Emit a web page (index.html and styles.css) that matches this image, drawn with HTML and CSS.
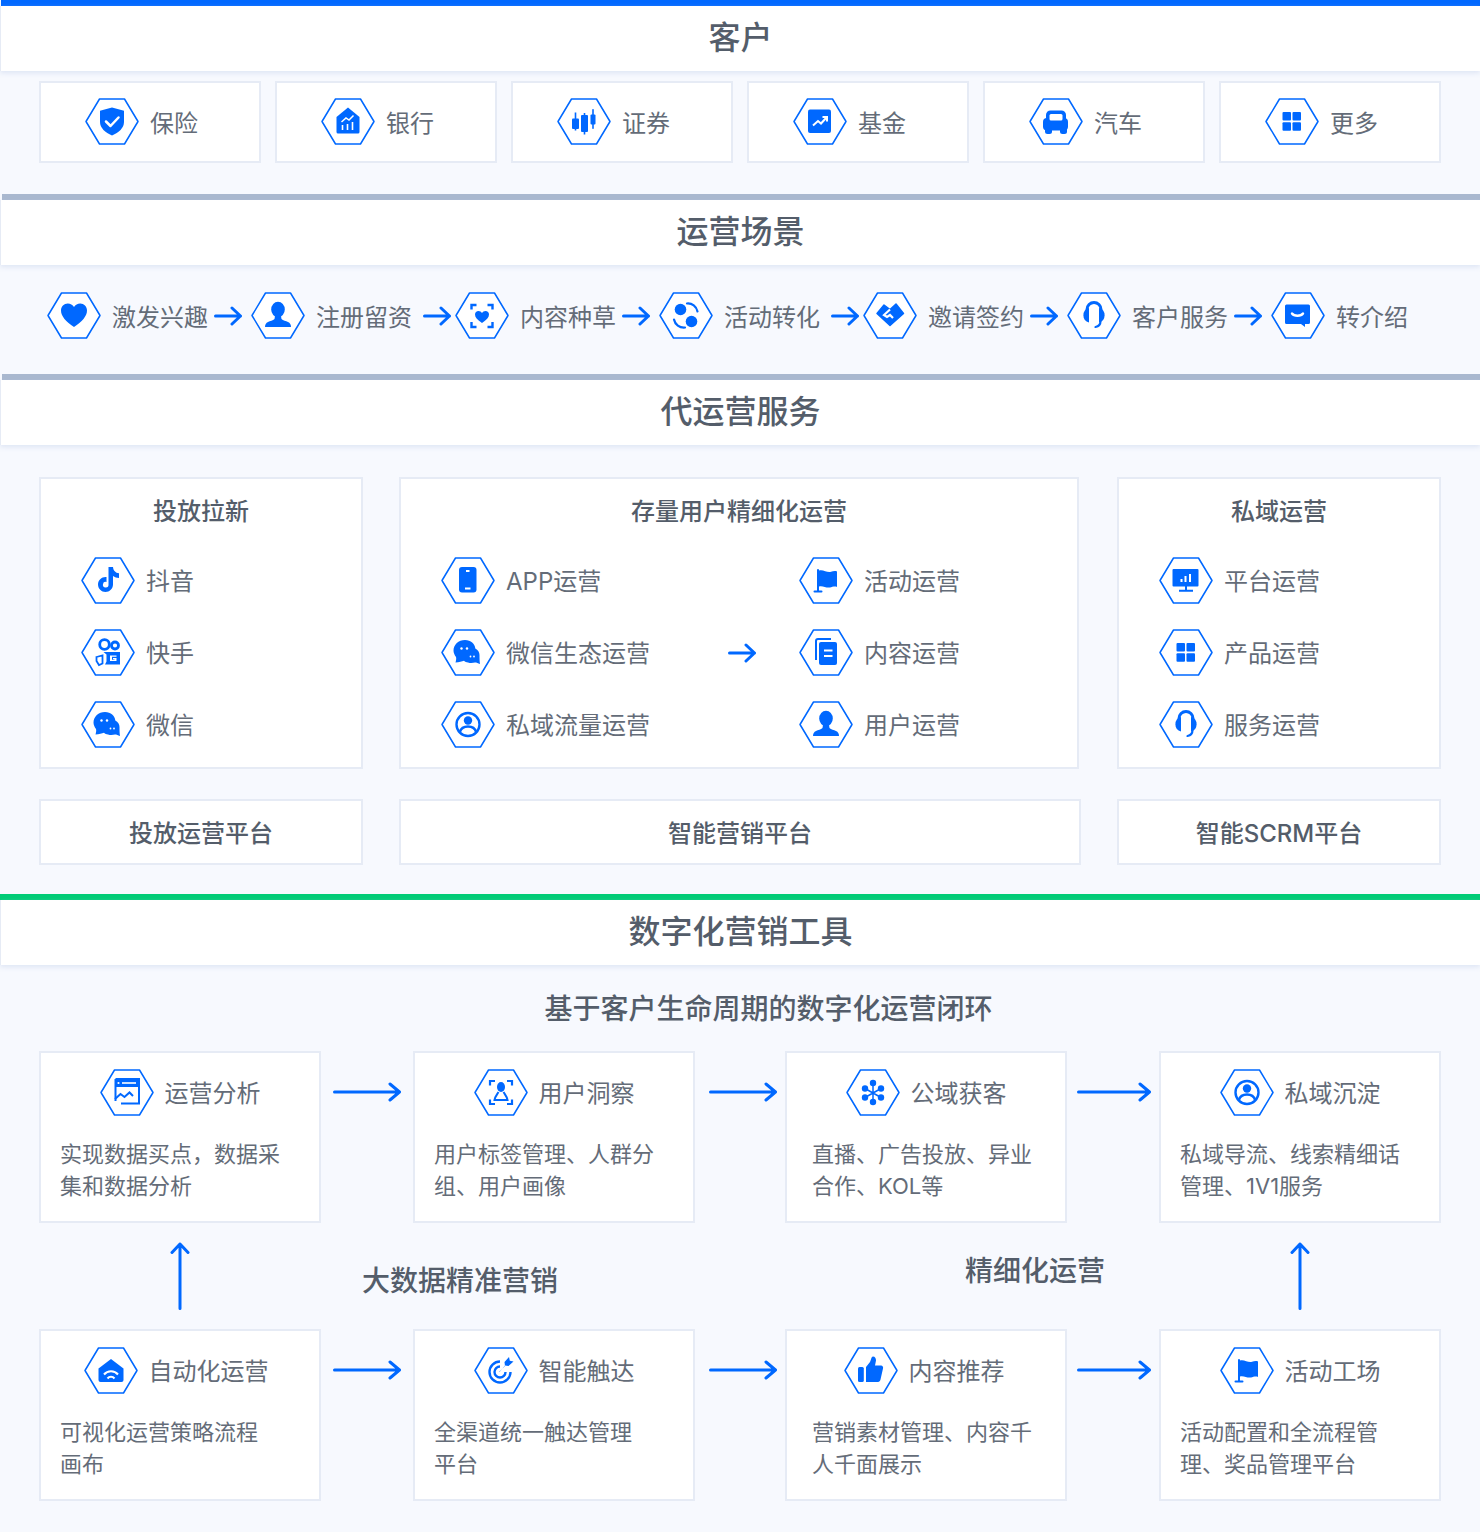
FILE: index.html
```html
<!DOCTYPE html>
<html lang="zh-CN">
<head>
<meta charset="utf-8">
<title>客户运营服务全景</title>
<link rel="stylesheet" href="styles.css">
</head>
<body>
<svg class="sprite" xmlns="http://www.w3.org/2000/svg">
  <defs>
    <polygon id="frame" points="1,23.5 14.5,1 39.5,1 53,23.5 39.5,46 14.5,46" fill="#fff" stroke="#0068ff" stroke-width="1.5" stroke-linejoin="round"/>
    <symbol id="i-arrow" viewBox="0 0 28 20"><path d="M1.500 10h25M18 2l8.500 8-8.500 8" fill="none" stroke="#0068ff" stroke-width="3" stroke-linecap="round" stroke-linejoin="round"/></symbol>
    <symbol id="i-shield" viewBox="0 0 54 47"><use href="#frame"/><path d="M27 9.500l12 3.200v11.300c0 6-5.200 10.500-12 13.500-6.800-3-12-7.500-12-13.500V12.700z" fill="#0068ff"/><path d="M21 23.500l4.500 4.500 8-8.500" fill="none" stroke="#fff" stroke-width="2.500" stroke-linecap="round" stroke-linejoin="round"/></symbol>
    <symbol id="i-bank" viewBox="0 0 54 47"><use href="#frame"/><path d="M27 9.500l11.500 9.500v15a1.500 1.500 0 0 1-1.500 1.500H17a1.500 1.500 0 0 1-1.500-1.500V19z" fill="#0068ff"/><path d="M21.500 32v-5M26.500 32v-6M31.500 32v-8" stroke="#fff" stroke-width="1.600" fill="none"/><path d="M20.500 24l4.500-4 3 2 4.500-4.500" stroke="#fff" stroke-width="1.500" fill="none"/></symbol>
    <symbol id="i-candle" viewBox="0 0 54 47"><use href="#frame"/><g fill="#0068ff"><rect x="15" y="20.500" width="7" height="10.500" rx="1"/><rect x="17.700" y="14.500" width="1.600" height="18"/><rect x="24" y="17" width="7" height="17" rx="1"/><rect x="26.700" y="15" width="1.600" height="21.500"/><rect x="33.500" y="16.500" width="5" height="10" rx="1"/><rect x="35.200" y="11" width="1.600" height="20" rx=".8"/></g></symbol>
    <symbol id="i-fund" viewBox="0 0 54 47"><use href="#frame"/><rect x="15" y="11.500" width="23" height="23.500" rx="2" fill="#0068ff"/><path d="M20 27.500l5-4.500 3 2.500 5.500-6M29.500 19h4.500v4.500" fill="none" stroke="#fff" stroke-width="2"/></symbol>
    <symbol id="i-car" viewBox="0 0 54 47"><use href="#frame"/><g fill="#0068ff"><rect x="17" y="12.500" width="20" height="14" rx="4.500"/><rect x="14" y="20" width="25" height="12.500" rx="4"/><rect x="16" y="29" width="7" height="7" rx="2.500"/><rect x="31" y="29" width="7" height="7" rx="2.500"/></g><rect x="20.500" y="16" width="13" height="6.500" rx="1.500" fill="#fff"/></symbol>
    <symbol id="i-grid" viewBox="0 0 54 47"><use href="#frame"/><g fill="#0068ff"><rect x="17.500" y="14" width="8.500" height="8.500" rx="1"/><rect x="27.500" y="14" width="8.500" height="8.500" rx="1"/><rect x="17.500" y="24.300" width="8.500" height="8.500" rx="1"/><rect x="27.500" y="24.300" width="8.500" height="8.500" rx="1"/></g></symbol>
    <symbol id="i-heart" viewBox="0 0 54 47"><use href="#frame"/><path d="M27 35c-8-5.500-13-10.600-13-16.500 0-4 3-7 6.800-7 2.600 0 4.800 1.300 6.200 3.500 1.400-2.200 3.600-3.500 6.200-3.500 3.800 0 6.800 3 6.800 7 0 5.900-5 11-13 16.500z" fill="#0068ff"/></symbol>
    <symbol id="i-person" viewBox="0 0 54 47"><use href="#frame"/><g fill="#0068ff"><ellipse cx="27" cy="17.500" rx="6.800" ry="7.800"/><path d="M14 35c0-2.500 1-4 3-5 2-1 5-1.500 6.500-3l.5-3h6l.5 3c1.500 1.500 4.500 2 6.500 3 2 1 3 2.500 3 5z"/></g></symbol>
    <symbol id="i-scanheart" viewBox="0 0 54 47"><use href="#frame"/><path d="M16.500 17.500v-4.500h5M32.500 13h5v4.500M37.500 30v5h-5M21.500 35h-5v-5" fill="none" stroke="#0068ff" stroke-width="2.400"/><path d="M27 31c-4.500-3-7-5.500-7-8.500 0-2 1.500-3.500 3.500-3.500 1.500 0 2.700.7 3.500 2 .8-1.300 2-2 3.500-2 2 0 3.500 1.500 3.500 3.500 0 3-2.500 5.500-7 8.500z" fill="#0068ff"/></symbol>
    <symbol id="i-swap" viewBox="0 0 54 47"><use href="#frame"/><g fill="#0068ff"><circle cx="21.500" cy="17.500" r="5.800"/><circle cx="32.500" cy="29.500" r="5.800"/></g><path d="M28 11.500c5-.5 9.500 3 10.500 8M26 35.500c-5.500.5-10-3-11-8" fill="none" stroke="#0068ff" stroke-width="2.200" stroke-linecap="round"/></symbol>
    <symbol id="i-deal" viewBox="0 0 54 47"><use href="#frame"/><path d="M27 33.500L14 21.500l7-8.500 6 4.500 6-5.500 7.500 9.500z" fill="#0068ff" stroke="#0068ff" stroke-width="1.500" stroke-linejoin="round"/><path d="M27 17.500l-6 5.500 3 2 3-2 3 3" fill="none" stroke="#fff" stroke-width="2.200"/></symbol>
    <symbol id="i-headset" viewBox="0 0 54 47"><use href="#frame"/><path d="M20 21v-3.500a7 7 0 0 1 14 0V21" fill="none" stroke="#0068ff" stroke-width="3"/><g fill="#0068ff"><path d="M22 16a7.500 7.500 0 0 0 0 14.500z"/><path d="M32 16a7.500 7.500 0 0 1 0 14.500z"/></g><path d="M33.500 29c0 3.500-2 5.500-5 6" fill="none" stroke="#0068ff" stroke-width="2.200" stroke-linecap="round"/></symbol>
    <symbol id="i-chat" viewBox="0 0 54 47"><use href="#frame"/><path d="M15.500 12.500h22a1.500 1.500 0 0 1 1.500 1.500v16.500a1.500 1.500 0 0 1-1.500 1.500H34v3l-4-3H15.500a1.500 1.500 0 0 1-1.500-1.500V14a1.500 1.500 0 0 1 1.500-1.500z" fill="#0068ff"/><path d="M21 21.500c2 3 9 3 11 0" fill="none" stroke="#fff" stroke-width="2.400" stroke-linecap="round"/></symbol>
    <symbol id="i-tiktok" viewBox="0 0 54 47"><use href="#frame"/><path fill-rule="evenodd" d="M27.500 10h4.500c.3 3.500 2.500 6 6 6.300V21c-2.300 0-4.300-.7-6-2v8.500c0 4.200-3.500 7.500-7.500 7.500S17 31.700 17 27.500s3.500-7.500 7.500-7.500l1 .1V25a2.800 2.800 0 1 0 2 2.500z" fill="#0068ff"/></symbol>
    <symbol id="i-kuaishou" viewBox="0 0 54 47"><use href="#frame"/><g fill="none" stroke="#0068ff"><circle cx="23.500" cy="15.500" r="4.800" stroke-width="2.800"/><circle cx="34" cy="16.500" r="3.500" stroke-width="2.800"/><path d="M15.500 28l6-1.500v8l-3.500 1.500-2.500-4z" stroke-width="1.800"/></g><path fill-rule="evenodd" d="M22.500 23h16.500v12.500H24l1.500-3v-7z M29 26.500v5.500h6.500v-3H32v1.200h1.500v.6h-2.500v-3h4.500v-1.300z" fill="#0068ff"/></symbol>
    <symbol id="i-wechat" viewBox="0 0 54 47"><use href="#frame"/><path d="M24 11c5.800 0 10 3.800 10.300 8.500 2.700 1.300 4.200 3.700 4.200 6.500 0 3 .1 6.500.5 9-2-.8-3.500-1.500-5-1.500-2 .5-4.500.8-7 0-1.500-.3-3-.8-4-1.800-2 .8-5 1.500-8.500 1.800.5-2 1-4 .5-5.500-1.500-2-2.500-4.300-2.500-6.500 0-5.800 5-10.500 11.500-10.500z" fill="#0068ff"/><g fill="#fff"><circle cx="20.500" cy="19.500" r="1.200"/><circle cx="26" cy="19.500" r="1.200"/><circle cx="29.500" cy="27.500" r=".9"/><circle cx="33" cy="27.500" r=".9"/></g></symbol>
    <symbol id="i-phone" viewBox="0 0 54 47"><use href="#frame"/><rect x="18" y="10" width="17.500" height="25.500" rx="3" fill="#0068ff"/><path d="M25 14h3.500M24 31.500h5.500" stroke="#fff" stroke-width="1.800"/></symbol>
    <symbol id="i-ring" viewBox="0 0 54 47"><use href="#frame"/><circle cx="27" cy="23.500" r="11.500" fill="none" stroke="#0068ff" stroke-width="2.400"/><circle cx="27" cy="19.500" r="4.200" fill="#0068ff"/><path d="M19 31c1-4 4-5.500 8-5.500s7 1.500 8 5.500" fill="none" stroke="#0068ff" stroke-width="2.400"/></symbol>
    <symbol id="i-flag" viewBox="0 0 54 47"><use href="#frame"/><path d="M19 13v21M15.500 34.500h7" stroke="#0068ff" stroke-width="2" stroke-linecap="round"/><path d="M20 13.500c4-1.500 8 2.500 12 1.300 2-.6 4-1.300 6-.3v15.500c-2-1-5 0-7 .5-4 .7-7-2-11-1z" fill="#0068ff"/></symbol>
    <symbol id="i-docs" viewBox="0 0 54 47"><use href="#frame"/><path d="M17 31V12a2 2 0 0 1 2-2h13" fill="none" stroke="#0068ff" stroke-width="2"/><rect x="20" y="13" width="18" height="23" rx="2" fill="#0068ff"/><path d="M25 21.500h8.500M25 27h8.500" stroke="#fff" stroke-width="2"/></symbol>
    <symbol id="i-monitor" viewBox="0 0 54 47"><use href="#frame"/><rect x="13.500" y="12" width="26" height="17.500" rx="1" fill="#0068ff"/><path d="M27 29v4.500M20 33.800h14" stroke="#0068ff" stroke-width="2"/><path d="M22.500 25v-3M26.500 25v-6M31 25v-8" stroke="#fff" stroke-width="2"/></symbol>
    <symbol id="i-window" viewBox="0 0 54 47"><use href="#frame"/><path d="M15.500 10h23.500v8H15.500z" fill="#0068ff"/><path d="M15.500 10h23.500v24.500H21M15.500 10v22" fill="none" stroke="#0068ff" stroke-width="2"/><circle cx="18.500" cy="14" r="1.100" fill="#fff"/><path d="M22 14h14" stroke="#fff" stroke-width="1.600"/><path d="M15 30l5.500-5 4 3 5-4.500 3.500 3.500" fill="none" stroke="#0068ff" stroke-width="2"/></symbol>
    <symbol id="i-userscan" viewBox="0 0 54 47"><use href="#frame"/><path d="M16 16.500V12h5M33 12h5v4.500M38 30.500V35h-5M21 35h-5v-4.500" fill="none" stroke="#0068ff" stroke-width="2.200"/><ellipse cx="27" cy="18" rx="4" ry="5" fill="#0068ff"/><path d="M24.500 23c-1.500 2.500-3.500 4.500-4 8h13c-.5-3.500-2.500-5.500-4-8" fill="none" stroke="#0068ff" stroke-width="2"/></symbol>
    <symbol id="i-nodes" viewBox="0 0 54 47"><use href="#frame"/><path d="M27 14v19M19 19.500l16 9M35 19.500l-16 9" stroke="#0068ff" stroke-width="1.500"/><g fill="#0068ff"><circle cx="27" cy="14" r="3.200"/><circle cx="19" cy="19.500" r="3.200"/><circle cx="35" cy="19.500" r="3.200"/><circle cx="19" cy="28.500" r="3.200"/><circle cx="35" cy="28.500" r="3.200"/><circle cx="27" cy="33" r="3.200"/></g></symbol>
    <symbol id="i-house" viewBox="0 0 54 47"><use href="#frame"/><path d="M27 12l12.500 9.500V33a2 2 0 0 1-2 2h-21a2 2 0 0 1-2-2V21.500z" fill="#0068ff"/><path d="M20 27.500a9 9 0 0 1 14 0M23.500 31.500a4.500 4.500 0 0 1 7 0" fill="none" stroke="#fff" stroke-width="2"/></symbol>
    <symbol id="i-target" viewBox="0 0 54 47"><use href="#frame"/><g fill="none" stroke="#0068ff" stroke-width="2.400"><path d="M26 14.500a10.500 10.500 0 1 0 10.500 10.500"/><path d="M26 19.500a5.500 5.500 0 1 0 5.500 5.500"/></g><path d="M25 25l6-6-.5-4 4.500-5 .8 3.700 3.700.8-5 4.500-3.500-.5-5.500 6.500z" fill="#0068ff"/></symbol>
    <symbol id="i-thumb" viewBox="0 0 54 47"><use href="#frame"/><rect x="14" y="20" width="5.800" height="15" rx="1.500" fill="#0068ff"/><path d="M22 20l4-5c1-1.500 1-5 3-5.500 2 0 3 2 3 4l-1 5h6c1.500 0 2.500 1.500 2 3l-2.500 11c-.3 1.200-1.200 2.500-2.500 2.500H22z" fill="#0068ff"/></symbol>
  </defs>
</svg>

<main class="page">
  <div class="bar bar-blue"></div>
  <h2 class="head">客户</h2>
  <section class="industries">
    <div class="industry"><svg class="hex"><use href="#i-shield"/></svg><span>保险</span></div>
    <div class="industry"><svg class="hex"><use href="#i-bank"/></svg><span>银行</span></div>
    <div class="industry"><svg class="hex"><use href="#i-candle"/></svg><span>证券</span></div>
    <div class="industry"><svg class="hex"><use href="#i-fund"/></svg><span>基金</span></div>
    <div class="industry"><svg class="hex"><use href="#i-car"/></svg><span>汽车</span></div>
    <div class="industry"><svg class="hex"><use href="#i-grid"/></svg><span>更多</span></div>
  </section>

  <div class="bar bar-grey"></div>
  <h2 class="head">运营场景</h2>
  <section class="flow">
    <div class="step"><svg class="hex"><use href="#i-heart"/></svg><span>激发兴趣</span><svg class="arrow"><use href="#i-arrow"/></svg></div>
    <div class="step step-wide"><svg class="hex"><use href="#i-person"/></svg><span>注册留资</span><svg class="arrow"><use href="#i-arrow"/></svg></div>
    <div class="step"><svg class="hex"><use href="#i-scanheart"/></svg><span>内容种草</span><svg class="arrow"><use href="#i-arrow"/></svg></div>
    <div class="step step-wide"><svg class="hex"><use href="#i-swap"/></svg><span>活动转化</span><svg class="arrow"><use href="#i-arrow"/></svg></div>
    <div class="step"><svg class="hex"><use href="#i-deal"/></svg><span>邀请签约</span><svg class="arrow"><use href="#i-arrow"/></svg></div>
    <div class="step"><svg class="hex"><use href="#i-headset"/></svg><span>客户服务</span><svg class="arrow"><use href="#i-arrow"/></svg></div>
    <div class="step"><svg class="hex"><use href="#i-chat"/></svg><span>转介绍</span></div>
  </section>

  <div class="bar bar-grey"></div>
  <h2 class="head">代运营服务</h2>
  <section class="services">
    <div class="service-row">
      <article class="panel">
        <h3 class="panel-title">投放拉新</h3>
        <div class="list">
          <div class="item"><svg class="hex"><use href="#i-tiktok"/></svg><span>抖音</span></div>
          <div class="item"><svg class="hex"><use href="#i-kuaishou"/></svg><span>快手</span></div>
          <div class="item"><svg class="hex"><use href="#i-wechat"/></svg><span>微信</span></div>
        </div>
      </article>
      <article class="panel panel-main">
        <h3 class="panel-title">存量用户精细化运营</h3>
        <div class="panel-split">
          <div class="list">
            <div class="item"><svg class="hex"><use href="#i-phone"/></svg><span>APP运营</span></div>
            <div class="item"><svg class="hex"><use href="#i-wechat"/></svg><span>微信生态运营</span></div>
            <div class="item"><svg class="hex"><use href="#i-ring"/></svg><span>私域流量运营</span></div>
          </div>
          <svg class="arrow split-arrow"><use href="#i-arrow"/></svg>
          <div class="list">
            <div class="item"><svg class="hex"><use href="#i-flag"/></svg><span>活动运营</span></div>
            <div class="item"><svg class="hex"><use href="#i-docs"/></svg><span>内容运营</span></div>
            <div class="item"><svg class="hex"><use href="#i-person"/></svg><span>用户运营</span></div>
          </div>
        </div>
      </article>
      <article class="panel">
        <h3 class="panel-title">私域运营</h3>
        <div class="list">
          <div class="item"><svg class="hex"><use href="#i-monitor"/></svg><span>平台运营</span></div>
          <div class="item"><svg class="hex"><use href="#i-grid"/></svg><span>产品运营</span></div>
          <div class="item"><svg class="hex"><use href="#i-headset"/></svg><span>服务运营</span></div>
        </div>
      </article>
    </div>
    <div class="platform-row">
      <div class="platform">投放运营平台</div>
      <div class="platform">智能营销平台</div>
      <div class="platform">智能SCRM平台</div>
    </div>
  </section>

  <div class="bar bar-green"></div>
  <h2 class="head">数字化营销工具</h2>
  <section class="tools">
    <h3 class="tools-title">基于客户生命周期的数字化运营闭环</h3>
    <div class="tool-grid">
      <article class="tool">
        <div class="tool-head"><svg class="hex"><use href="#i-window"/></svg><span>运营分析</span></div>
        <p class="tool-desc">实现数据买点，数据采<br>集和数据分析</p>
      </article>
      <svg class="long-arrow" viewBox="0 0 68 20"><path d="M1.500 10h65M57 2l9.500 8-9.500 8" fill="none" stroke="#0068ff" stroke-width="3" stroke-linecap="round" stroke-linejoin="round"/></svg>
      <article class="tool">
        <div class="tool-head"><svg class="hex"><use href="#i-userscan"/></svg><span>用户洞察</span></div>
        <p class="tool-desc">用户标签管理、人群分<br>组、用户画像</p>
      </article>
      <svg class="long-arrow long-arrow-mid" viewBox="0 0 68 20"><path d="M1.500 10h65M57 2l9.500 8-9.500 8" fill="none" stroke="#0068ff" stroke-width="3" stroke-linecap="round" stroke-linejoin="round"/></svg>
      <article class="tool tool-inset">
        <div class="tool-head"><svg class="hex"><use href="#i-nodes"/></svg><span>公域获客</span></div>
        <p class="tool-desc">直播、广告投放、异业<br>合作、KOL等</p>
      </article>
      <svg class="long-arrow long-arrow-wide" viewBox="0 0 74 20"><path d="M1.500 10h71M63 2l9.500 8-9.500 8" fill="none" stroke="#0068ff" stroke-width="3" stroke-linecap="round" stroke-linejoin="round"/></svg>
      <article class="tool">
        <div class="tool-head"><svg class="hex"><use href="#i-ring"/></svg><span>私域沉淀</span></div>
        <p class="tool-desc">私域导流、线索精细话<br>管理、1V1服务</p>
      </article>

      <svg class="up-arrow up-arrow-first" viewBox="0 0 20 68"><path d="M10 66.500V2M2 10.500L10 2l8 8.500" fill="none" stroke="#0068ff" stroke-width="3" stroke-linecap="round" stroke-linejoin="round"/></svg>
      <div class="mid-label mid-label-left">大数据精准营销</div>
      <div class="mid-label mid-label-right">精细化运营</div>
      <svg class="up-arrow up-arrow-last" viewBox="0 0 20 68"><path d="M10 66.500V2M2 10.500L10 2l8 8.500" fill="none" stroke="#0068ff" stroke-width="3" stroke-linecap="round" stroke-linejoin="round"/></svg>

      <article class="tool">
        <div class="tool-head tool-head-left4"><svg class="hex"><use href="#i-house"/></svg><span>自动化运营</span></div>
        <p class="tool-desc">可视化运营策略流程<br>画布</p>
      </article>
      <svg class="long-arrow" viewBox="0 0 68 20"><path d="M1.500 10h65M57 2l9.500 8-9.500 8" fill="none" stroke="#0068ff" stroke-width="3" stroke-linecap="round" stroke-linejoin="round"/></svg>
      <article class="tool">
        <div class="tool-head"><svg class="hex"><use href="#i-target"/></svg><span>智能触达</span></div>
        <p class="tool-desc">全渠道统一触达管理<br>平台</p>
      </article>
      <svg class="long-arrow long-arrow-mid" viewBox="0 0 68 20"><path d="M1.500 10h65M57 2l9.500 8-9.500 8" fill="none" stroke="#0068ff" stroke-width="3" stroke-linecap="round" stroke-linejoin="round"/></svg>
      <article class="tool tool-inset">
        <div class="tool-head tool-head-left2"><svg class="hex"><use href="#i-thumb"/></svg><span>内容推荐</span></div>
        <p class="tool-desc">营销素材管理、内容千<br>人千面展示</p>
      </article>
      <svg class="long-arrow long-arrow-wide" viewBox="0 0 74 20"><path d="M1.500 10h71M63 2l9.500 8-9.500 8" fill="none" stroke="#0068ff" stroke-width="3" stroke-linecap="round" stroke-linejoin="round"/></svg>
      <article class="tool">
        <div class="tool-head"><svg class="hex"><use href="#i-flag"/></svg><span>活动工场</span></div>
        <p class="tool-desc">活动配置和全流程管<br>理、奖品管理平台</p>
      </article>
    </div>
  </section>
</main>
</body>
</html>
```

FILE: styles.css
```css
* { box-sizing: border-box; }

html, body {
  margin: 0;
  padding: 0;
}

body {
  background: #f7f9fe;
  color: #646c78;
  font-family: "Inter", "Noto Sans CJK SC", "Noto Sans", sans-serif;
  font-size: 24px;
  line-height: 32px;
}

.sprite { display: none; }

.page {
  width: 1480px;
  height: 1532px;
}

.bar { height: 6px; }
.bar-blue { background: #0068ff; margin-left: 1px; }
.bar-grey { background: #a9b8cf; margin-left: 2px; }
.bar-green { background: #00cc76; }

.head {
  height: 65px;
  margin: 0;
  background: #fff;
  border-left: 1px solid #e6ebf5;
  box-shadow: 0 2px 5px rgba(190, 203, 232, .45);
  color: #545d6a;
  font-size: 32px;
  font-weight: 500;
  line-height: 64px;
  text-align: center;
}

.hex {
  flex: none;
  width: 54px;
  height: 47px;
}

.arrow {
  flex: none;
  width: 28px;
  height: 20px;
}

/* customers */
.industries {
  display: grid;
  grid-template-columns: repeat(6, 222px);
  gap: 14px;
  height: 123px;
  padding: 10px 0 0 39px;
}

.industry {
  display: flex;
  align-items: center;
  gap: 11px;
  height: 82px;
  padding: 0 0 1px 44px;
  background: #fff;
  border: 2px solid #e6ebf5;
}

.industry span { padding-top: 4px; }

/* scenario flow */
.flow {
  display: flex;
  height: 109px;
  padding: 27px 0 0 47px;
}

.step {
  display: flex;
  align-items: center;
  width: 204px;
  height: 47px;
}

.step span {
  margin-left: 11px;
  padding-top: 4px;
  white-space: nowrap;
}

.step .arrow { margin-left: 6px; }
.step-wide .arrow { margin-left: 11px; }

/* managed services */
.services {
  height: 449px;
  padding: 32px 39px 0;
}

.service-row,
.platform-row {
  display: grid;
  grid-template-columns: 324px 1fr 324px;
  column-gap: 36px;
}

.panel {
  height: 292px;
  background: #fff;
  border: 2px solid #e6ebf5;
}

.panel-main { margin-right: 2px; }

.panel-title {
  margin: 0;
  padding-top: 16px;
  height: 49px;
  color: #545d6a;
  font-size: 24px;
  font-weight: 500;
  line-height: 34px;
  text-align: center;
}

.list {
  display: flex;
  flex-direction: column;
  gap: 25px;
  padding: 29px 0 0 40px;
}

.item {
  display: flex;
  align-items: center;
  gap: 11px;
  height: 47px;
}

.item span { padding-top: 2px; white-space: nowrap; }

.panel-split {
  display: grid;
  grid-template-columns: 327px 31px 1fr;
}

.split-arrow {
  align-self: center;
  margin-top: 29px;
}

.platform-row { margin-top: 30px; }

.platform {
  height: 66px;
  padding-top: 2px;
  background: #fff;
  border: 2px solid #e6ebf5;
  color: #545d6a;
  font-weight: 500;
  line-height: 62px;
  text-align: center;
}

/* tools */
.tools-title {
  margin: 0 0 0 57px;
  height: 86px;
  padding-top: 24px;
  color: #545d6a;
  font-size: 28px;
  font-weight: 500;
  line-height: 40px;
  text-align: center;
}

.tool-grid {
  display: grid;
  grid-template-columns: 282px 92px 282px 90px 282px 92px 282px;
  grid-template-rows: 172px 106px 172px;
  padding-left: 39px;
}

.tool {
  height: 172px;
  padding-top: 16px;
  background: #fff;
  border: 2px solid #e6ebf5;
}

.tool-head {
  display: flex;
  align-items: center;
  justify-content: center;
  gap: 11px;
  height: 47px;
}

.tool-head span { padding-top: 2px; }
.tool-head-left4 { padding-right: 8px; }
.tool-head-left2 { padding-right: 4px; }

.tool-desc {
  margin: 0;
  padding: 22px 0 0 19px;
  font-size: 22px;
  line-height: 32px;
  white-space: nowrap;
}

.tool-inset .tool-desc { padding-left: 25px; }

.long-arrow {
  justify-self: center;
  width: 68px;
  height: 20px;
  margin-top: 31px;
}

.long-arrow-mid { margin-left: 6px; }

.long-arrow-wide {
  width: 74px;
  margin-left: 2px;
}

.up-arrow {
  justify-self: center;
  width: 20px;
  height: 68px;
  margin-top: 19px;
}

.up-arrow-first { grid-column: 1; }
.up-arrow-last { grid-column: 7; }

.mid-label {
  color: #545d6a;
  font-size: 28px;
  font-weight: 500;
  line-height: 40px;
  white-space: nowrap;
}

.mid-label-left {
  grid-column: 2 / 4;
  margin: 38px 0 0 41px;
}

.mid-label-right {
  grid-column: 5 / 7;
  margin: 28px 0 0 180px;
}
```
